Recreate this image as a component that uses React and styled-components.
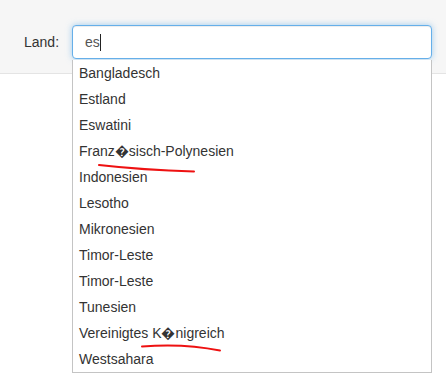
import React from "react";
import styled, { createGlobalStyle } from "styled-components";

const Global = createGlobalStyle`
  html, body { margin: 0; padding: 0; background: #fff; }
  body { font-family: "Liberation Sans", Arial, sans-serif; }
`;

const Page = styled.div`
  min-height: 380px;
  background: #fff;
`;

const Band = styled.div`
  height: 74px;
  box-sizing: border-box;
  background: #f6f6f6;
  border-bottom: 1px solid #e4e4e4;
  padding: 25px 14px 0 24px;
  display: flex;
  align-items: flex-start;
  gap: 12px;
`;

const Label = styled.label`
  width: 36px;
  font-size: 14px;
  color: #333;
  line-height: 34px;
  white-space: nowrap;
`;

const Field = styled.div`
  position: relative;
  width: 360px;
  z-index: 2;
`;

const Input = styled.div`
  box-sizing: border-box;
  height: 34px;
  border: 1px solid #66afe9;
  border-radius: 4px;
  background: #fff;
  box-shadow: inset 0 1px 1px rgba(0,0,0,.075), 0 0 6px rgba(102,175,233,.6);
  padding: 0 12px;
  display: flex;
  align-items: center;
  font-size: 14px;
  color: #555;
`;

const Caret = styled.span`
  display: inline-block;
  width: 1px;
  height: 17px;
  background: #222;
`;

const Menu = styled.ul`
  position: absolute;
  top: 100%;
  left: 0;
  right: 0;
  margin: 1px 0 0;
  padding: 0;
  list-style: none;
  background: #fff;
  border: 1px solid #c4c4c4;
  border-top: none;
`;

const Item = styled.li`
  height: 26px;
  line-height: 26px;
  padding-left: 6px;
  font-size: 14px;
  color: #333;
  white-space: nowrap;
`;

const Marks = styled.svg`
  position: absolute;
  left: 0;
  top: 0;
  width: 100%;
  height: 100%;
  pointer-events: none;
  overflow: visible;
`;

const items = [
  "Bangladesch",
  "Estland",
  "Eswatini",
  "Franz\uFFFDsisch-Polynesien",
  "Indonesien",
  "Lesotho",
  "Mikronesien",
  "Timor-Leste",
  "Timor-Leste",
  "Tunesien",
  "Vereinigtes K\uFFFDnigreich",
  "Westsahara",
];

export default function App() {
  return (
    <Page>
      <Global />
      <Band>
        <Label>Land:</Label>
        <Field>
          <Input>
            es<Caret />
          </Input>
          <Menu>
            {items.map((t, i) => (
              <Item key={i}>{t}</Item>
            ))}
            <Marks>
              <path d="M26 105 Q 70 110 121 111.5" stroke="#ee1111" strokeWidth="2" fill="none" strokeLinecap="round" />
              <path d="M69 286.5 Q 110 283 147 290.5" stroke="#ee1111" strokeWidth="2" fill="none" strokeLinecap="round" />
            </Marks>
          </Menu>
        </Field>
      </Band>
    </Page>
  );
}
